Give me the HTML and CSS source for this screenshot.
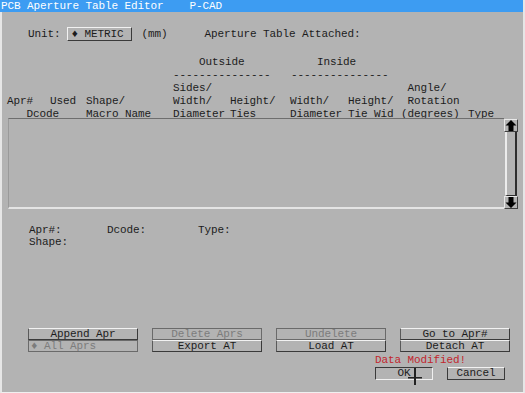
FILE: index.html
```html
<!DOCTYPE html>
<html lang="en">
<head>
    <meta charset="UTF-8">
    <title>PCB Aperture Table Editor</title>
    <link rel="stylesheet" href="styles.css">
</head>
<body>
    <div class="window">
        <div class="titlebar">PCB Aperture Table Editor    P-CAD</div>

        <div class="unit-row">
            <span>Unit:</span>
            <span class="btn unit-btn">&#9830; METRIC</span>
            <span class="mm">(mm)</span>
            <span class="attached">Aperture Table Attached:</span>
        </div>

        <!-- column headers -->
        <div class="header">
            <div class="group outside">Outside</div>
            <div class="group inside">Inside</div>
            <div class="dash outside">---------------</div>
            <div class="dash inside">---------------</div>

            <div class="c1"><br>Apr#<br>   Dcode</div>
            <div class="c2"><br>Used<br></div>
            <div class="c3"><br>Shape/<br>Macro Name</div>
            <div class="c4">Sides/<br>Width/<br>Diameter</div>
            <div class="c5"><br>Height/<br>Ties</div>
            <div class="c6"><br>Width/<br>Diameter</div>
            <div class="c7"><br>Height/<br>Tie Wid</div>
            <div class="c8"> Angle/<br> Rotation<br>(degrees)</div>
            <div class="c9"><br><br>Type</div>
        </div>

        <div class="list">
            <div class="list-body"></div>
            <div class="scrollbar">
                <div class="arrow">
                    <svg width="12" height="11" viewBox="0 0 12 11"><polygon points="6,0 11.5,5.5 8.5,5.5 8.5,11 3.5,11 3.5,5.5 0.5,5.5" fill="#000"/></svg>
                </div>
                <div class="track"></div>
                <div class="arrow">
                    <svg width="12" height="11" viewBox="0 0 12 11"><polygon points="6,11 11.5,5.5 8.5,5.5 8.5,0 3.5,0 3.5,5.5 0.5,5.5" fill="#000"/></svg>
                </div>
            </div>
        </div>

        <div class="details">
            <span>Apr#:</span><span>Dcode:</span><span>Type:</span>
            <span>Shape:</span>
        </div>

        <div class="buttons">
            <span class="btn">Append Apr</span>
            <span class="btn disabled">Delete Aprs</span>
            <span class="btn disabled">Undelete</span>
            <span class="btn">Go to Apr#</span>
            <span class="btn disabled left">&#9830; All Aprs</span>
            <span class="btn">Export AT</span>
            <span class="btn">Load AT</span>
            <span class="btn">Detach AT</span>
        </div>

        <div class="footer">
            <div class="modified">Data Modified!</div>
            <div class="ok-row">
                <span class="btn pressed">OK<svg class="cursor" width="16" height="17" viewBox="0 0 16 17"><rect x="6" y="0" width="2" height="17" fill="#222"/><rect x="0" y="9" width="14" height="1.5" fill="#222"/></svg></span>
                <span class="btn">Cancel</span>
            </div>
        </div>
    </div>
</body>
</html>
```

FILE: styles.css
```css
body {
    margin: 0;
    background-color: #8c8c8c;
    font-family: "Liberation Mono", "Courier New", monospace;
    font-size: 11px;
    letter-spacing: -0.1px;
    color: #1c1c1c;
}
.window {
    width: 525px;
    height: 393px;
    box-sizing: border-box;
    background-color: #b3b3b3;
    border-left: 2px solid #e6e6e6;
    border-right: 2px solid #e6e6e6;
    border-bottom: 1px solid #f0f0f0;
    display: flex;
    flex-direction: column;
}
.window > * {
    flex-shrink: 0;
}
.titlebar {
    height: 12px;
    line-height: 12px;
    margin-left: -2px;
    padding-left: 1px;
    background-color: #3d9cf2;
    color: #fff;
    white-space: pre;
}
.unit-row {
    display: flex;
    align-items: center;
    height: 14px;
    margin-top: 15px;
    padding-left: 26px;
}
.btn {
    box-sizing: border-box;
    height: 12px;
    line-height: 10px;
    text-align: center;
    white-space: pre;
    border: 1px solid #3a3a3a;
    border-top-color: #f2f2f2;
    background-color: #b3b3b3;
}
.unit-btn {
    width: 65px;
    height: 14px;
    line-height: 12px;
    margin-left: 6px;
    border-left-color: #f2f2f2;
    text-align: left;
    padding-left: 4px;
}
.mm {
    margin-left: 10px;
}
.attached {
    margin-left: 37px;
}
.header {
    display: grid;
    grid-template-columns: 43px 36px 87px 57px 60px 58px 53px 67px auto;
    line-height: 13px;
    margin-top: 15px;
    padding-left: 5px;
}
.header > div {
    white-space: pre;
}
.header .outside {
    grid-column: 4 / span 2;
}
.header .inside {
    grid-column: 6 / span 2;
    margin-left: 1px;
}
.header .group {
    grid-row: 1;
    padding-left: 26px;
}
.header .dash {
    grid-row: 2;
}
.c1, .c2, .c3, .c4, .c5, .c6, .c7, .c8, .c9 {
    grid-row: 3;
}
.c1 { grid-column: 1; }
.c2 { grid-column: 2; }
.c3 { grid-column: 3; }
.c4 { grid-column: 4; }
.c5 { grid-column: 5; }
.c6 { grid-column: 6; }
.c7 { grid-column: 7; }
.c8 { grid-column: 8; }
.c9 { grid-column: 9; }
.list {
    display: flex;
    height: 91px;
    margin-left: 6px;
    margin-right: 5px;
    margin-top: -3px;
}
.list-body {
    flex: 1;
    border-top: 1px solid #6e6e6e;
    border-left: 1px solid #9a9a9a;
    border-bottom: 2px solid #e4e4e4;
}
.scrollbar {
    width: 14px;
    display: flex;
    flex-direction: column;
    padding-top: 1px;
}
.arrow {
    display: flex;
    justify-content: center;
    align-items: center;
    border: 1px solid #e8e8e8;
    border-right-color: #404040;
    border-bottom-color: #404040;
    box-sizing: border-box;
    height: 13px;
}
.track {
    flex: 1;
    margin: 0 1px;
    border-left: 2px solid #ececec;
    border-right: 2px solid #2e2e2e;
    border-bottom: 1px solid #2e2e2e;
}
.details {
    display: grid;
    grid-template-columns: 78px 91px auto;
    line-height: 12px;
    margin-top: 15px;
    padding-left: 27px;
}
.buttons {
    display: grid;
    grid-template-columns: repeat(4, 110px);
    column-gap: 14px;
    margin-top: 80px;
    padding-left: 26px;
}
.buttons .btn {
    border-left-color: #5a5a5a;
}
.btn.disabled {
    color: #7c7c7c;
    border-color: #6a6a6a;
}
.btn.left {
    text-align: left;
    padding-left: 2px;
}
.footer {
    padding-left: 373px;
    margin-top: 2px;
}
.modified {
    color: #c2262e;
    line-height: 13px;
}
.ok-row {
    display: flex;
    gap: 14px;
}
.ok-row .btn {
    width: 58px;
    height: 13px;
    line-height: 11px;
}
.btn.pressed {
    position: relative;
    border-color: #f0f0f0;
    border-top-color: #3a3a3a;
    border-left-color: #3a3a3a;
}
.cursor {
    position: absolute;
    top: 0;
    left: 32px;
}
```
